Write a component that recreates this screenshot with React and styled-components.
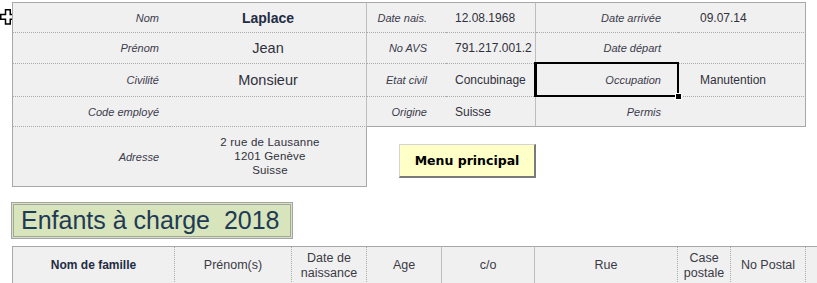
import React from "react";
import styled, { createGlobalStyle, css } from "styled-components";

const Global = createGlobalStyle`
  html, body { margin: 0; padding: 0; background: #fff; overflow: hidden; }
  body { font-family: "Liberation Sans", Arial, sans-serif; }
`;

const OUTER = "#a8a8a8";
const INNER = "#bdbdbd";
const DOT = "#a9a9a9";
const BG = "#f0f0f0";

const Page = styled.div`
  position: relative;
  padding: 2px 0 0 12px;
  width: 817px;
  height: 283px;
  box-sizing: border-box;
  overflow: hidden;
`;

const Cursor = styled.svg`
  position: absolute;
  left: 0;
  top: 9px;
`;

const Sheet = styled.div`
  display: grid;
  grid-template-columns: 158px 197px 79px 90px 142px 128px;
  grid-template-rows: 31px 31px 33px 30px 60px;
  width: 794px;
`;

const cellBorders = css`
  box-sizing: border-box;
  background: ${BG};
  border-top: ${(p) => (p.$first ? `1px solid ${OUTER}` : "none")};
  border-bottom: 1px ${(p) => (p.$solidBottom ? `solid ${OUTER}` : `dotted ${DOT}`)};
`;

const Label = styled.div`
  ${cellBorders};
  display: flex;
  align-items: center;
  justify-content: flex-end;
  position: relative;
  font-style: italic;
  font-size: 11px;
  color: #3b3b4c;
  padding-right: ${(p) => (p.$section === 1 ? 11 : p.$section === 2 ? 19 : 17)}px;
  border-left: ${(p) => (p.$section === 1 ? `1px solid ${OUTER}` : "none")};
  ${(p) =>
    p.$selected &&
    css`
      &::after {
        content: "";
        position: absolute;
        left: -2px;
        top: -2px;
        right: -1px;
        bottom: -1px;
        border: 2px solid #000;
        border-left-width: 3px;
        pointer-events: none;
      }
      &::before {
        content: "";
        position: absolute;
        right: -4px;
        bottom: -4px;
        width: 5px;
        height: 5px;
        background: #000;
        border: 1px solid #fff;
        z-index: 2;
      }
    `}
`;

const Value = styled.div`
  ${cellBorders};
  display: flex;
  align-items: center;
  color: #30303c;
  border-right: 1px solid ${(p) => (p.$section === 3 ? OUTER : INNER)};
  ${(p) =>
    p.$section === 1
      ? css`
          justify-content: center;
          font-size: 14.5px;
        `
      : css`
          justify-content: flex-start;
          font-size: 12px;
          padding-left: ${p.$section === 2 ? 9 : 22}px;
          white-space: nowrap;
        `}
  ${(p) =>
    p.$bold &&
    css`
      font-weight: bold;
      color: #1f2c44;
      font-size: 14px;
    `}
`;

const AddressLabel = styled(Label)`
  border-bottom: 1px solid ${OUTER};
`;

const AddressValue = styled.div`
  box-sizing: border-box;
  background: ${BG};
  border-right: 1px solid ${OUTER};
  border-bottom: 1px solid ${OUTER};
  display: flex;
  flex-direction: column;
  align-items: center;
  justify-content: center;
  font-size: 11.5px;
  line-height: 14px;
  letter-spacing: 0.2px;
  color: #30303c;
  padding: 0 0 2px 4px;
`;

const ButtonArea = styled.div`
  grid-column: 3 / span 4;
  display: flex;
  align-items: flex-start;
  padding: 17px 0 0 32px;
`;

const MenuButton = styled.button`
  width: 137px;
  height: 34px;
  box-sizing: border-box;
  background: #ffffc8;
  border: 1px solid #d4d4d4;
  border-right: 2px solid #7a7a7a;
  border-bottom: 2px solid #7a7a7a;
  font-family: "DejaVu Sans", Verdana, sans-serif;
  font-weight: bold;
  font-size: 12.5px;
  color: #000;
  padding: 0 0 1px;
  cursor: default;
`;

const Title = styled.div`
  margin: 15px 0 0 -1px;
  width: 282px;
  height: 37px;
  box-sizing: border-box;
  border: 3px double #a4a4a4;
  background: #d8e4bc;
  color: #1f3a55;
  font-size: 25px;
  line-height: 31px;
  padding-left: 7px;
  white-space: pre;
`;

const HeaderRow = styled.div`
  margin-top: 7px;
  display: grid;
  grid-template-columns: 163px 117px 75px 75px 93px 143px 53px 75px 11px;
  height: 40px;
`;

const HeadCell = styled.div`
  box-sizing: border-box;
  background: ${BG};
  border-top: 1px solid ${OUTER};
  border-left: ${(p) => (p.$first ? `1px solid ${OUTER}` : "none")};
  border-right: ${(p) =>
    p.$last ? "none" : `1px ${p.$solid ? `solid ${INNER}` : `dotted ${DOT}`}`};
  display: flex;
  align-items: center;
  justify-content: center;
  text-align: center;
  font-size: 12.5px;
  line-height: 15px;
  color: #3a3a44;
  padding-bottom: 2px;
  ${(p) =>
    p.$bold &&
    css`
      font-weight: bold;
      font-size: 12px;
      color: #1f2c44;
    `}
`;

const rows = [
  [
    { l: "Nom", v: "Laplace", bold: true },
    { l: "Date nais.", v: "12.08.1968" },
    { l: "Date arrivée", v: "09.07.14" },
  ],
  [
    { l: "Prénom", v: "Jean" },
    { l: "No AVS", v: "791.217.001.2" },
    { l: "Date départ", v: "" },
  ],
  [
    { l: "Civilité", v: "Monsieur" },
    { l: "Etat civil", v: "Concubinage" },
    { l: "Occupation", v: "Manutention", selected: true },
  ],
  [
    { l: "Code employé", v: "" },
    { l: "Origine", v: "Suisse" },
    { l: "Permis", v: "" },
  ],
];

const headers = [
  { t: "Nom de famille", bold: true },
  { t: "Prénom(s)" },
  { t: ["Date de", "naissance"] },
  { t: "Age", solid: true },
  { t: "c/o", solid: true },
  { t: "Rue" },
  { t: ["Case", "postale"] },
  { t: "No Postal" },
  { t: "", last: true },
];

export default function App() {
  return (
    <>
      <Global />
      <Page>
        <Cursor width="16" height="16" viewBox="0 0 16 16">
          <path
            d="M5.5 0.75H10.25V5.5H15V10.25H10.25V15H5.5V10.25H0.75V5.5H5.5Z"
            fill="#fff"
            stroke="#000"
            strokeWidth="1.5"
          />
        </Cursor>
        <Sheet>
          {rows.map((row, ri) =>
            row.map((c, si) => {
              const section = si + 1;
              const solidBottom = ri === 3 && section > 1;
              return (
                <React.Fragment key={`${ri}-${si}`}>
                  <Label
                    $section={section}
                    $first={ri === 0}
                    $solidBottom={solidBottom}
                    $selected={c.selected}
                  >
                    {c.l}
                  </Label>
                  <Value
                    $section={section}
                    $first={ri === 0}
                    $solidBottom={solidBottom}
                    $bold={c.bold}
                  >
                    {c.v}
                  </Value>
                </React.Fragment>
              );
            })
          )}
          <AddressLabel $section={1}>Adresse</AddressLabel>
          <AddressValue>
            <span>2 rue de Lausanne</span>
            <span>1201 Genève</span>
            <span>Suisse</span>
          </AddressValue>
          <ButtonArea>
            <MenuButton>Menu principal</MenuButton>
          </ButtonArea>
        </Sheet>
        <Title>{"Enfants à charge  2018"}</Title>
        <HeaderRow>
          {headers.map((h, i) => (
            <HeadCell
              key={i}
              $first={i === 0}
              $last={h.last}
              $bold={h.bold}
              $solid={h.solid}
            >
              {Array.isArray(h.t) ? (
                <span>
                  {h.t[0]}
                  <br />
                  {h.t[1]}
                </span>
              ) : (
                h.t
              )}
            </HeadCell>
          ))}
        </HeaderRow>
      </Page>
    </>
  );
}
